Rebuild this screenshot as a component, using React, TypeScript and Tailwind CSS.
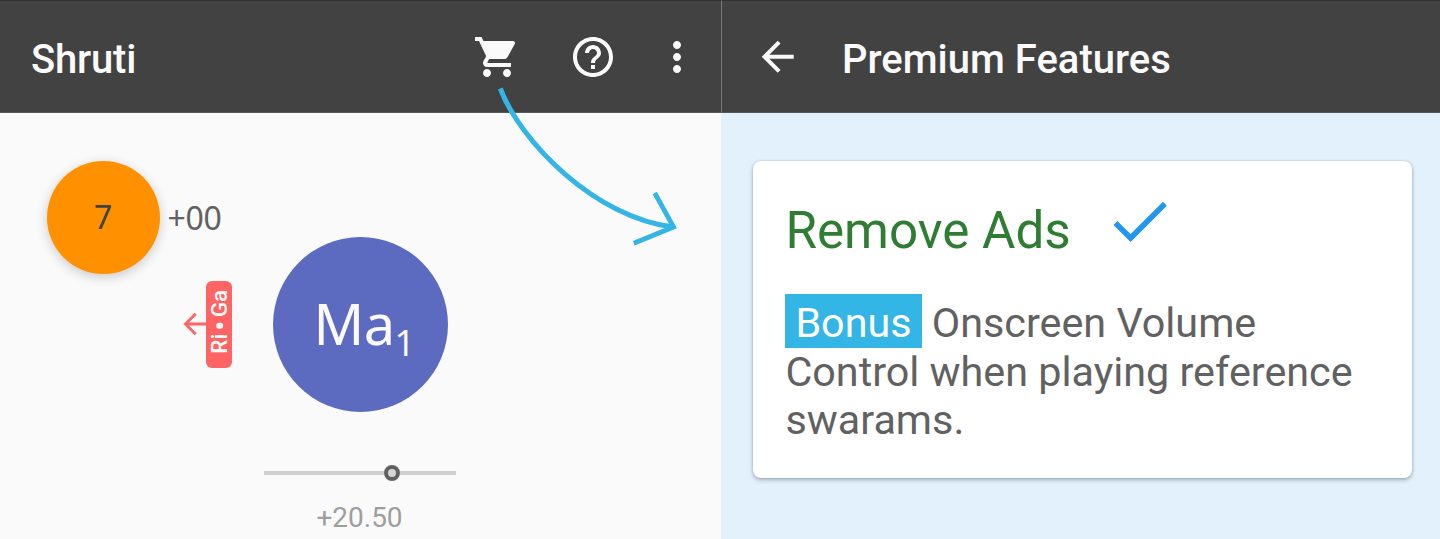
const CartIcon = () => (
  <svg className="size-12" viewBox="0 0 24 24" fill="currentColor">
    <path d="M7 18c-1.1 0-1.99.9-1.99 2S5.9 22 7 22s2-.9 2-2-.9-2-2-2zM1 2v2h2l3.6 7.59-1.35 2.45c-.16.28-.25.61-.25.96 0 1.1.9 2 2 2h12v-2H7.42c-.14 0-.25-.11-.25-.25l.03-.12.9-1.63h7.45c.75 0 1.41-.41 1.75-1.03l3.58-6.49A1.003 1.003 0 0 0 20 4H5.21l-.94-2H1zm16 16c-1.1 0-1.99.9-1.99 2s.89 2 1.99 2 2-.9 2-2-.9-2-2-2z" />
  </svg>
);

const HelpIcon = () => (
  <svg className="size-12" viewBox="0 0 24 24" fill="currentColor">
    <path d="M11 18h2v-2h-2v2zm1-16C6.48 2 2 6.48 2 12s4.48 10 10 10 10-4.48 10-10S17.52 2 12 2zm0 18c-4.41 0-8-3.59-8-8s3.59-8 8-8 8 3.59 8 8-3.59 8-8 8zm0-14c-2.21 0-4 1.79-4 4h2c0-1.1.9-2 2-2s2 .9 2 2c0 2-3 1.75-3 5h2c0-2.25 3-2.5 3-5 0-2.21-1.79-4-4-4z" />
  </svg>
);

const MoreIcon = () => (
  <svg className="size-12" viewBox="0 0 24 24" fill="currentColor">
    <path d="M12 8c1.1 0 2-.9 2-2s-.9-2-2-2-2 .9-2 2 .9 2 2 2zm0 2c-1.1 0-2 .9-2 2s.9 2 2 2 2-.9 2-2-.9-2-2-2zm0 6c-1.1 0-2 .9-2 2s.9 2 2 2 2-.9 2-2-.9-2-2-2z" />
  </svg>
);

const BackIcon = () => (
  <svg className="size-12" viewBox="0.15 0.15 24 24" fill="currentColor">
    <path d="M20 11H7.83l5.59-5.59L12 4l-8 8 8 8 1.41-1.41L7.83 13H20v-2z" />
  </svg>
);

const CheckIcon = () => (
  <svg className="h-[41px] w-[54px]" viewBox="0 0 54 41" fill="none" stroke="#2196f3" strokeWidth="5.6">
    <path d="M2.4 21 17.6 36 51.9 1.8" />
  </svg>
);

function TunerScreen() {
  return (
    <section className="flex w-[721px] shrink-0 flex-col bg-[#fafafa]">
      <header className="flex h-[113px] items-center border-t border-b border-t-[#333] border-b-[#5b5858] bg-[#424242] pr-5 pl-[31px] text-[#fafafa]">
        <h1 className="grow pt-[6px] text-[40px] leading-none font-medium tracking-[-0.2px]">Shruti</h1>
        <div className="flex">
          <CartIcon />
          <span className="ml-[48.5px]"><HelpIcon /></span>
          <span className="ml-9"><MoreIcon /></span>
        </div>
      </header>

      <div className="flex items-center pt-12 pl-[47px]">
        <div className="flex size-[112.5px] items-center justify-center rounded-full bg-[#ff9100] font-['Noto_Sans',sans-serif] text-[32px] leading-none text-[#424242] shadow-[0_3px_12px_rgba(0,0,0,0.2)]">
          7
        </div>
        <span className="pt-[2px] pl-2 font-['Noto_Sans',sans-serif] text-[32px] leading-none tracking-[-0.3px] text-[#616161]">+00</span>
      </div>

      <div className="-mt-[36.5px] flex items-center pl-[183px]">
        <svg className="h-6 w-[23px]" viewBox="0 0 23 24" fill="none" stroke="#ff6464" strokeWidth="2.8">
          <path d="M23 12H2.5M12.7 1.8 2.5 12l10.2 10.2" />
        </svg>
        <div className="flex h-[87.5px] w-[26px] items-center justify-center rounded-md bg-[#ff6464]">
          <span className="flex -rotate-90 items-center pl-[5px] text-[22.5px] leading-none font-medium whitespace-nowrap text-[#fafafa]">
            Ri<span className="mx-[5px] size-[6.5px] rounded-full bg-current" />Ga
          </span>
        </div>
        <div className="ml-[41px] flex size-[174.5px] items-baseline justify-center rounded-full bg-[#5c6bc0] pt-[44px] font-['Noto_Sans',sans-serif] text-[56px] text-[#fafafa]">
          <span className="pl-[8px] tracking-[-0.6px]">Ma</span>
          <span className="relative top-[11px] text-[36px]">1</span>
        </div>
      </div>

      <div className="mt-[53.5px] ml-[264px] flex h-4 w-48 items-center">
        <span className="h-1 w-[120px] bg-[#d0d0d0]" />
        <span className="size-4 rounded-full border-4 border-[#616161] bg-[#d6d6d6]" />
        <span className="h-1 grow bg-[#d0d0d0]" />
      </div>
      <div className="mt-[21px] pr-[2px] text-center text-[28px] leading-8 text-[#9e9e9e]">+20.50</div>
    </section>
  );
}

function PremiumScreen() {
  return (
    <section className="flex grow flex-col bg-[#e3f1fc]">
      <header className="flex h-[113px] items-center border-t border-b border-l border-t-[#333] border-b-[#5b5858] border-l-[#777] bg-[#424242] pl-8 text-[#fafafa]">
        <BackIcon />
        <h1 className="pt-[6px] pl-[40px] text-[40px] leading-none font-medium">Premium Features</h1>
      </header>

      <article className="mt-12 ml-8 h-[317px] w-[658.5px] rounded-lg bg-white pt-[43px] pl-[32.4px] shadow-[0_2px_4px_rgba(60,80,100,0.4),0_0_2px_rgba(60,80,100,0.25)]">
        <div className="flex items-start">
          <h2 className="text-[51.2px] leading-[54px] whitespace-nowrap text-[#2e7d32]">Remove Ads</h2>
          <span className="-mt-[2px] ml-[42px]"><CheckIcon /></span>
        </div>
        <p className="mt-[41px] text-[41.3px] leading-[48.5px] whitespace-nowrap text-[#616161]">
          <span className="bg-[#33b5e5] px-[10px] pt-[5px] pb-[1px] text-white">Bonus</span> Onscreen Volume
          <br />
          Control when playing reference
          <br />
          swarams.
        </p>
      </article>
    </section>
  );
}

export default function App() {
  return (
    <main className="relative flex h-[539px] w-[1440px] overflow-hidden font-[Roboto,sans-serif]">
      <TunerScreen />
      <PremiumScreen />
      <svg className="pointer-events-none absolute top-20 left-[490px] h-[180px] w-[200px]" viewBox="490 80 200 180" fill="none" stroke="#33b5e5">
        <path d="M500.3 88.5C520 141 595 218 674 227.2" strokeWidth="5" />
        <path d="M654.7 193 673.6 227 633.8 243.3" strokeWidth="4.8" />
      </svg>
    </main>
  );
}
